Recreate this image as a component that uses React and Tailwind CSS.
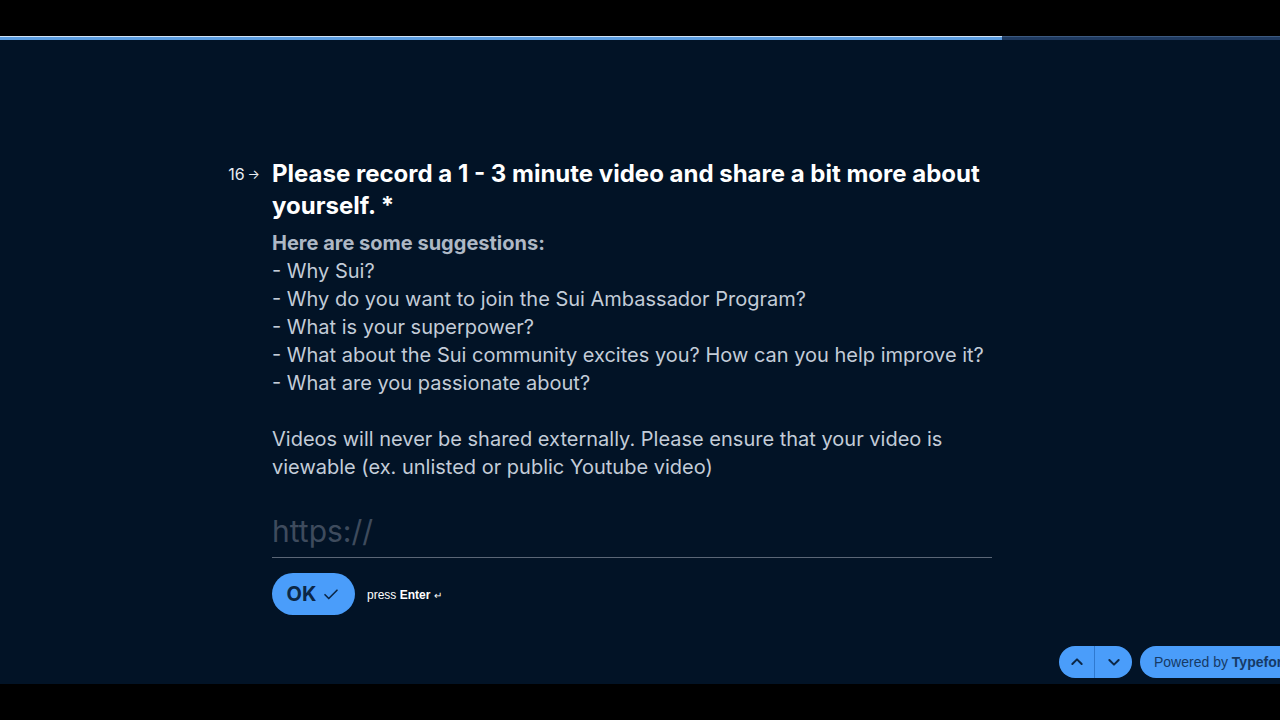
import React, { useState } from "react";

const Check = () => (
  <svg width="18" height="18" viewBox="0 0 24 24" fill="none" stroke="currentColor" strokeWidth="2.2" strokeLinecap="round" strokeLinejoin="round">
    <path d="M4 13l5 5L20 7" />
  </svg>
);

const Chevron = ({ up }) => (
  <svg width="16" height="16" viewBox="0 0 24 24" fill="none" stroke="currentColor" strokeWidth="3" strokeLinecap="round" strokeLinejoin="round">
    {up ? <path d="M5 15l7-7 7 7" /> : <path d="M5 9l7 7 7-7" />}
  </svg>
);

const suggestions = [
  "Why Sui?",
  "Why do you want to join the Sui Ambassador Program?",
  "What is your superpower?",
  "What about the Sui community excites you? How can you help improve it?",
  "What are you passionate about?",
];

const App = () => {
  const [url, setUrl] = useState("");

  return (
    <div className="w-[1280px] h-[720px] bg-black flex flex-col font-['Inter',sans-serif] overflow-hidden">
      <div className="h-[36px] shrink-0" />
      <div className="h-[648px] bg-[#021326] flex flex-col relative">
        {/* progress */}
        <div className="h-[4px] w-full bg-[#1f3a60] border-t border-[#3d5a80] flex">
          <div className="w-[1002px] h-[4px] -mt-px bg-[#5b9ce0] border-t border-[#cfe2f6]" />
        </div>

        <div className="flex pt-[118px]">
          <div className="w-[272px] flex justify-end items-center h-[18px] mt-[7px] pr-[12px] text-[16px] text-[#e8edf3] leading-none">
            <span>16</span>
            <span className="ml-[3px] text-[13px]">→</span>
          </div>
          <div className="w-[720px]">
            <h1 className="text-[24px] leading-[32px] font-bold text-white">
              Please record a 1 - 3 minute video and share a bit more about yourself. *
            </h1>
            <div className="mt-[7px] text-[20px] leading-[28px] text-[#c3ccd8]">
              <p className="font-bold text-[#aeb8c5]">Here are some suggestions:</p>
              {suggestions.map((s) => (
                <p key={s}>- {s}</p>
              ))}
              <p className="mt-[28px]">
                Videos will never be shared externally. Please ensure that your video is viewable (ex. unlisted or public Youtube video)
              </p>
            </div>
            <div className="mt-[30px] border-b border-[#5b6676] pb-[6px]">
              <input
                value={url}
                onChange={(e) => setUrl(e.target.value)}
                placeholder="https://"
                className="w-full bg-transparent outline-none text-[30px] leading-[40px] text-white placeholder:text-[#3e4b5d]"
              />
            </div>
            <div className="mt-[15px] flex items-center">
              <button className="h-[42px] w-[83px] rounded-full bg-[#4a9dfa] text-[#0c2746] flex items-center justify-center gap-[6px] text-[20px] font-bold">
                OK
                <Check />
              </button>
              <span className="ml-[12px] mt-[2px] text-[12px] text-white font-['Liberation_Sans',sans-serif]">
                press <b>Enter</b> <span className="text-[10px]">↵</span>
              </span>
            </div>
          </div>
        </div>

        <div className="absolute left-[1059px] top-[610px] flex gap-[8px]">
          <div className="h-[32px] w-[73px] rounded-full bg-[#4a9dfa] flex text-[#0c2746]">
            <button className="w-[36px] flex items-center justify-center border-r border-[#2f79cf]">
              <Chevron up />
            </button>
            <button className="flex-1 flex items-center justify-center">
              <Chevron />
            </button>
          </div>
          <div className="h-[32px] rounded-l-full bg-[#4a9dfa] pl-[14px] pr-[20px] flex items-center text-[14px] text-[#163a66] whitespace-nowrap font-['Liberation_Sans',sans-serif]">
            Powered by&nbsp;<b>Typeform</b>
          </div>
        </div>
      </div>
      <div className="flex-1" />
    </div>
  );
};

export default App;
